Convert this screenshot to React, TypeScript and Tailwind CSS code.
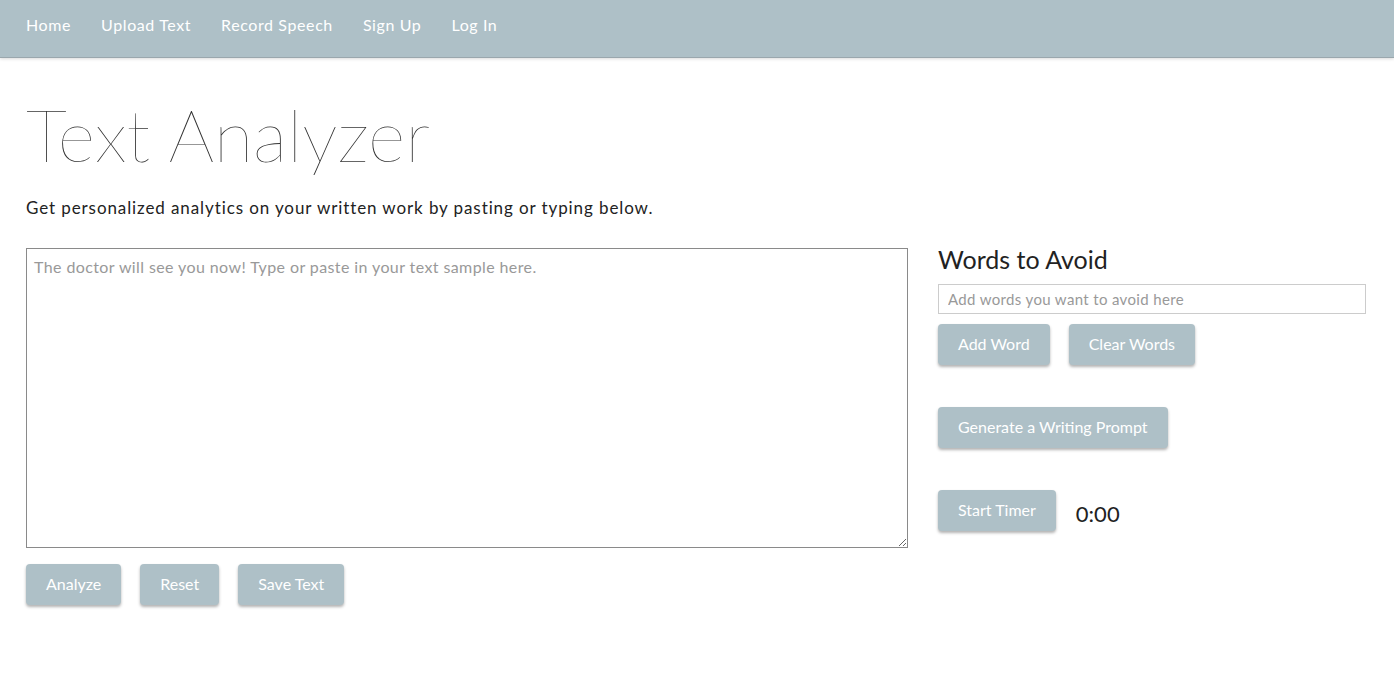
import React, { useState } from 'react';

const btn =
  'h-[41px] px-5 rounded-[4px] bg-[#aec0c7] text-white text-[16px] shadow-[0_2px_3px_rgba(0,0,0,0.3)] cursor-pointer';

export default function App() {
  const [text, setText] = useState('');
  const [word, setWord] = useState('');

  return (
    <div className="min-h-[685px] bg-white text-[#222]" style={{ fontFamily: 'Lato, "Open Sans", sans-serif' }}>
      {/* Nav */}
      <nav className="h-[58px] bg-[#aec0c7] border-b border-[#9aa7ad] shadow-[0_1px_3px_rgba(0,0,0,0.15)] flex items-start pt-[15px] px-[26px] gap-[30px] text-white text-[16px] leading-[20px] tracking-[0.6px]">
        <a>Home</a>
        <a>Upload Text</a>
        <a>Record Speech</a>
        <a>Sign Up</a>
        <a>Log In</a>
      </nav>

      <div className="px-[26px]">
        <h1 className="mt-[31px] text-[72px] font-extralight leading-[90px] text-[#333]">Text Analyzer</h1>
        <p className="mt-[16px] text-[17px] tracking-[0.9px] text-[#222]">Get personalized analytics on your written work by pasting or typing below.</p>

        <div className="mt-[27px] flex gap-[30px]">
          <div className="w-[882px]">
            <textarea
              value={text}
              onChange={(e) => setText(e.target.value)}
              placeholder="The doctor will see you now! Type or paste in your text sample here."
              className="block w-[882px] h-[300px] border border-[#8a8a8a] px-[7px] py-[6px] text-[16px] tracking-[0.4px] placeholder:text-[#999] outline-none"
            />
            <div className="mt-[16px] flex gap-[19px]">
              <button className={btn}>Analyze</button>
              <button className={btn}>Reset</button>
              <button className={btn}>Save Text</button>
            </div>
          </div>

          <div className="w-[428px]">
            <h2 className="mt-[-4px] text-[25px] leading-[30px] text-[#222]">Words to Avoid</h2>
            <input
              value={word}
              onChange={(e) => setWord(e.target.value)}
              placeholder="Add words you want to avoid here"
              className="mt-[10px] block w-[428px] h-[30px] border border-[#ccc] px-[9px] text-[15px] tracking-[0.35px] placeholder:text-[#999] outline-none"
            />
            <div className="mt-[10px] flex gap-[19px]">
              <button className={btn}>Add Word</button>
              <button className={btn}>Clear Words</button>
            </div>
            <div className="mt-[42px]">
              <button className={btn}>Generate a Writing Prompt</button>
            </div>
            <div className="mt-[42px] flex items-center gap-[20px]">
              <button className={btn}>Start Timer</button>
              <span className="text-[22px] text-[#222] mt-[6px]">0:00</span>
            </div>
          </div>
        </div>
      </div>
    </div>
  );
}
